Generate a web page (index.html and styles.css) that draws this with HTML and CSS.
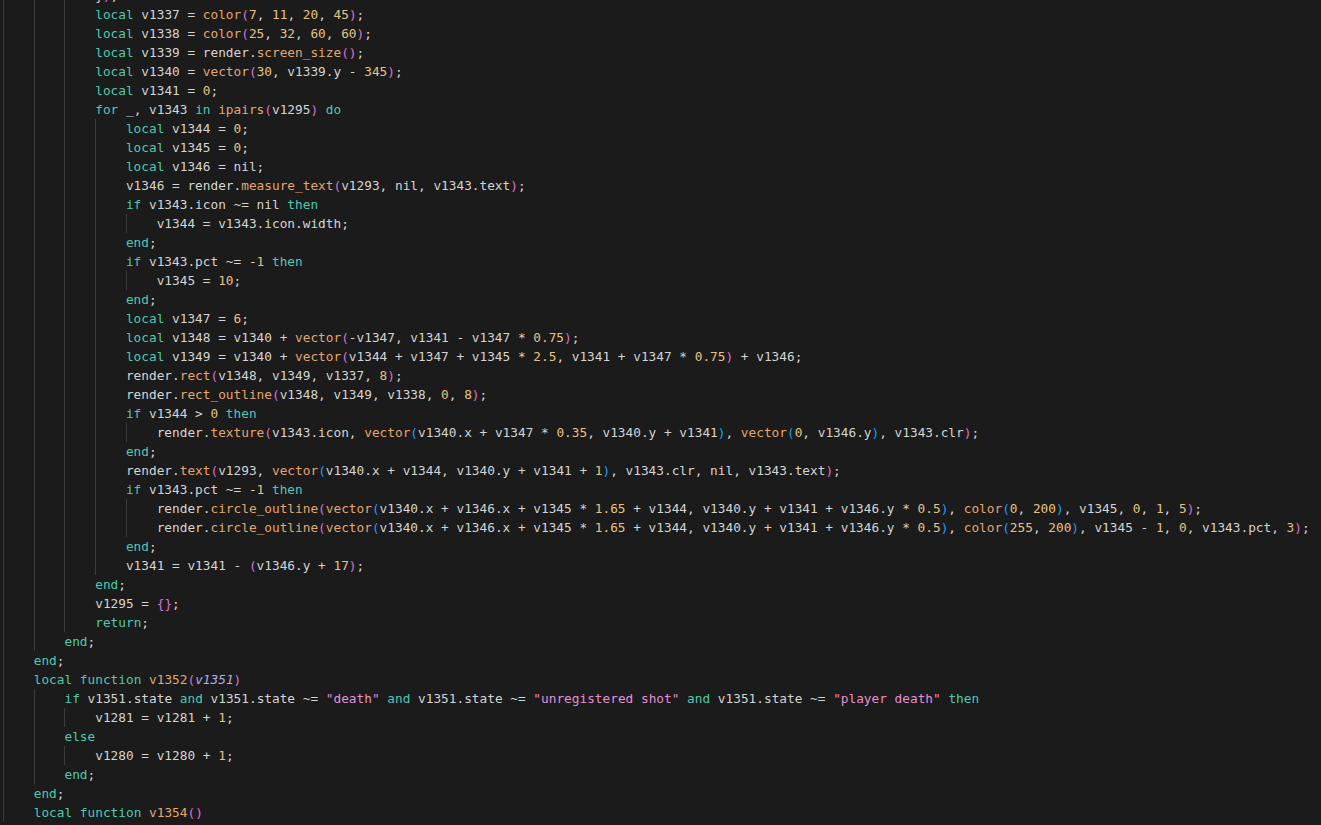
FILE: index.html
```html
<!DOCTYPE html>
<html>
<head>
<meta charset="utf-8">
<link rel="stylesheet" href="styles.css">
</head>
<body>
<div class="editor">
<div class="ln"><i class="g"></i><i class="g"></i><i class="g"></i><span>}<span class="p1">)</span>;</span></div>
<div class="ln"><i class="g"></i><i class="g"></i><i class="g"></i><span class="k">local</span> v1337 = <span class="f">color</span><span class="p1">(</span><span class="n">7</span>, <span class="n">11</span>, <span class="n">20</span>, <span class="n">45</span><span class="p1">)</span>;</div>
<div class="ln"><i class="g"></i><i class="g"></i><i class="g"></i><span class="k">local</span> v1338 = <span class="f">color</span><span class="p1">(</span><span class="n">25</span>, <span class="n">32</span>, <span class="n">60</span>, <span class="n">60</span><span class="p1">)</span>;</div>
<div class="ln"><i class="g"></i><i class="g"></i><i class="g"></i><span class="k">local</span> v1339 = render.<span class="f">screen_size</span><span class="p1">()</span>;</div>
<div class="ln"><i class="g"></i><i class="g"></i><i class="g"></i><span class="k">local</span> v1340 = <span class="f">vector</span><span class="p1">(</span><span class="n">30</span>, v1339.y - <span class="n">345</span><span class="p1">)</span>;</div>
<div class="ln"><i class="g"></i><i class="g"></i><i class="g"></i><span class="k">local</span> v1341 = <span class="n">0</span>;</div>
<div class="ln"><i class="g"></i><i class="g"></i><i class="g"></i><span class="k">for</span> _, v1343 <span class="k">in</span> <span class="f">ipairs</span><span class="p1">(</span>v1295<span class="p1">)</span> <span class="k">do</span></div>
<div class="ln"><i class="g"></i><i class="g"></i><i class="g"></i><i class="g"></i><span class="k">local</span> v1344 = <span class="n">0</span>;</div>
<div class="ln"><i class="g"></i><i class="g"></i><i class="g"></i><i class="g"></i><span class="k">local</span> v1345 = <span class="n">0</span>;</div>
<div class="ln"><i class="g"></i><i class="g"></i><i class="g"></i><i class="g"></i><span class="k">local</span> v1346 = nil;</div>
<div class="ln"><i class="g"></i><i class="g"></i><i class="g"></i><i class="g"></i>v1346 = render.<span class="f">measure_text</span><span class="p1">(</span>v1293, nil, v1343.text<span class="p1">)</span>;</div>
<div class="ln"><i class="g"></i><i class="g"></i><i class="g"></i><i class="g"></i><span class="k">if</span> v1343.icon ~= nil <span class="k">then</span></div>
<div class="ln"><i class="g"></i><i class="g"></i><i class="g"></i><i class="g"></i><i class="g"></i>v1344 = v1343.icon.width;</div>
<div class="ln"><i class="g"></i><i class="g"></i><i class="g"></i><i class="g"></i><span class="k">end</span>;</div>
<div class="ln"><i class="g"></i><i class="g"></i><i class="g"></i><i class="g"></i><span class="k">if</span> v1343.pct ~= -<span class="n">1</span> <span class="k">then</span></div>
<div class="ln"><i class="g"></i><i class="g"></i><i class="g"></i><i class="g"></i><i class="g"></i>v1345 = <span class="n">10</span>;</div>
<div class="ln"><i class="g"></i><i class="g"></i><i class="g"></i><i class="g"></i><span class="k">end</span>;</div>
<div class="ln"><i class="g"></i><i class="g"></i><i class="g"></i><i class="g"></i><span class="k">local</span> v1347 = <span class="n">6</span>;</div>
<div class="ln"><i class="g"></i><i class="g"></i><i class="g"></i><i class="g"></i><span class="k">local</span> v1348 = v1340 + <span class="f">vector</span><span class="p1">(</span>-v1347, v1341 - v1347 * <span class="n">0.75</span><span class="p1">)</span>;</div>
<div class="ln"><i class="g"></i><i class="g"></i><i class="g"></i><i class="g"></i><span class="k">local</span> v1349 = v1340 + <span class="f">vector</span><span class="p1">(</span>v1344 + v1347 + v1345 * <span class="n">2.5</span>, v1341 + v1347 * <span class="n">0.75</span><span class="p1">)</span> + v1346;</div>
<div class="ln"><i class="g"></i><i class="g"></i><i class="g"></i><i class="g"></i>render.<span class="f">rect</span><span class="p1">(</span>v1348, v1349, v1337, <span class="n">8</span><span class="p1">)</span>;</div>
<div class="ln"><i class="g"></i><i class="g"></i><i class="g"></i><i class="g"></i>render.<span class="f">rect_outline</span><span class="p1">(</span>v1348, v1349, v1338, <span class="n">0</span>, <span class="n">8</span><span class="p1">)</span>;</div>
<div class="ln"><i class="g"></i><i class="g"></i><i class="g"></i><i class="g"></i><span class="k">if</span> v1344 &gt; <span class="n">0</span> <span class="k">then</span></div>
<div class="ln"><i class="g"></i><i class="g"></i><i class="g"></i><i class="g"></i><i class="g"></i>render.<span class="f">texture</span><span class="p1">(</span>v1343.icon, <span class="f">vector</span><span class="p2">(</span>v1340.x + v1347 * <span class="n">0.35</span>, v1340.y + v1341<span class="p2">)</span>, <span class="f">vector</span><span class="p2">(</span><span class="n">0</span>, v1346.y<span class="p2">)</span>, v1343.clr<span class="p1">)</span>;</div>
<div class="ln"><i class="g"></i><i class="g"></i><i class="g"></i><i class="g"></i><span class="k">end</span>;</div>
<div class="ln"><i class="g"></i><i class="g"></i><i class="g"></i><i class="g"></i>render.<span class="f">text</span><span class="p1">(</span>v1293, <span class="f">vector</span><span class="p2">(</span>v1340.x + v1344, v1340.y + v1341 + <span class="n">1</span><span class="p2">)</span>, v1343.clr, nil, v1343.text<span class="p1">)</span>;</div>
<div class="ln"><i class="g"></i><i class="g"></i><i class="g"></i><i class="g"></i><span class="k">if</span> v1343.pct ~= -<span class="n">1</span> <span class="k">then</span></div>
<div class="ln"><i class="g"></i><i class="g"></i><i class="g"></i><i class="g"></i><i class="g"></i>render.<span class="f">circle_outline</span><span class="p1">(</span><span class="f">vector</span><span class="p2">(</span>v1340.x + v1346.x + v1345 * <span class="n">1.65</span> + v1344, v1340.y + v1341 + v1346.y * <span class="n">0.5</span><span class="p2">)</span>, <span class="f">color</span><span class="p2">(</span><span class="n">0</span>, <span class="n">200</span><span class="p2">)</span>, v1345, <span class="n">0</span>, <span class="n">1</span>, <span class="n">5</span><span class="p1">)</span>;</div>
<div class="ln"><i class="g"></i><i class="g"></i><i class="g"></i><i class="g"></i><i class="g"></i>render.<span class="f">circle_outline</span><span class="p1">(</span><span class="f">vector</span><span class="p2">(</span>v1340.x + v1346.x + v1345 * <span class="n">1.65</span> + v1344, v1340.y + v1341 + v1346.y * <span class="n">0.5</span><span class="p2">)</span>, <span class="f">color</span><span class="p2">(</span><span class="n">255</span>, <span class="n">200</span><span class="p2">)</span>, v1345 - <span class="n">1</span>, <span class="n">0</span>, v1343.pct, <span class="n">3</span><span class="p1">)</span>;</div>
<div class="ln"><i class="g"></i><i class="g"></i><i class="g"></i><i class="g"></i><span class="k">end</span>;</div>
<div class="ln"><i class="g"></i><i class="g"></i><i class="g"></i><i class="g"></i>v1341 = v1341 - <span class="p1">(</span>v1346.y + <span class="n">17</span><span class="p1">)</span>;</div>
<div class="ln"><i class="g"></i><i class="g"></i><i class="g"></i><span class="k">end</span>;</div>
<div class="ln"><i class="g"></i><i class="g"></i><i class="g"></i>v1295 = <span class="p1">{}</span>;</div>
<div class="ln"><i class="g"></i><i class="g"></i><i class="g"></i><span class="k">return</span>;</div>
<div class="ln"><i class="g"></i><i class="g"></i><span class="k">end</span>;</div>
<div class="ln"><i class="g"></i><span class="k">end</span>;</div>
<div class="ln"><i class="g"></i><span class="k">local</span> <span class="k">function</span> <span class="f">v1352</span><span class="p1">(</span><span class="prm">v1351</span><span class="p1">)</span></div>
<div class="ln"><i class="g"></i><i class="g"></i><span class="k">if</span> v1351.state <span class="k">and</span> v1351.state ~= <span class="s">"death"</span> <span class="k">and</span> v1351.state ~= <span class="s">"unregistered shot"</span> <span class="k">and</span> v1351.state ~= <span class="s">"player death"</span> <span class="k">then</span></div>
<div class="ln"><i class="g"></i><i class="g"></i><i class="g"></i>v1281 = v1281 + <span class="n">1</span>;</div>
<div class="ln"><i class="g"></i><i class="g"></i><span class="k">else</span></div>
<div class="ln"><i class="g"></i><i class="g"></i><i class="g"></i>v1280 = v1280 + <span class="n">1</span>;</div>
<div class="ln"><i class="g"></i><i class="g"></i><span class="k">end</span>;</div>
<div class="ln"><i class="g"></i><span class="k">end</span>;</div>
<div class="ln"><i class="g"></i><span class="k">local</span> <span class="k">function</span> <span class="f">v1354</span><span class="p1">()</span></div>
</div>
</body>
</html>
```

FILE: styles.css
```css
html, body {
  margin: 0;
  padding: 0;
  background: #1b1b1b;
  height: 100%;
  overflow: hidden;
}

.editor {
  margin-top: -14px;
  padding-left: 3px;
  font-family: "DejaVu Sans Mono", "Liberation Mono", monospace;
  font-size: 12.78px;
  color: #d4d4d4;
}

.ln {
  height: 19px;
  line-height: 19px;
  white-space: pre;
}

.g {
  display: inline-block;
  box-sizing: border-box;
  width: 4ch;
  height: 19px;
  vertical-align: top;
  border-left: 1px solid #3c3c3c;
}

.k { color: #4ec9b0; }
.f { color: #e4a66f; }
.n { color: #e6c384; }
.s { color: #e68fd3; }
.p1 { color: #da70d6; }
.p2 { color: #179fff; }
.prm { color: #b5a7ec; font-style: italic; }
```
